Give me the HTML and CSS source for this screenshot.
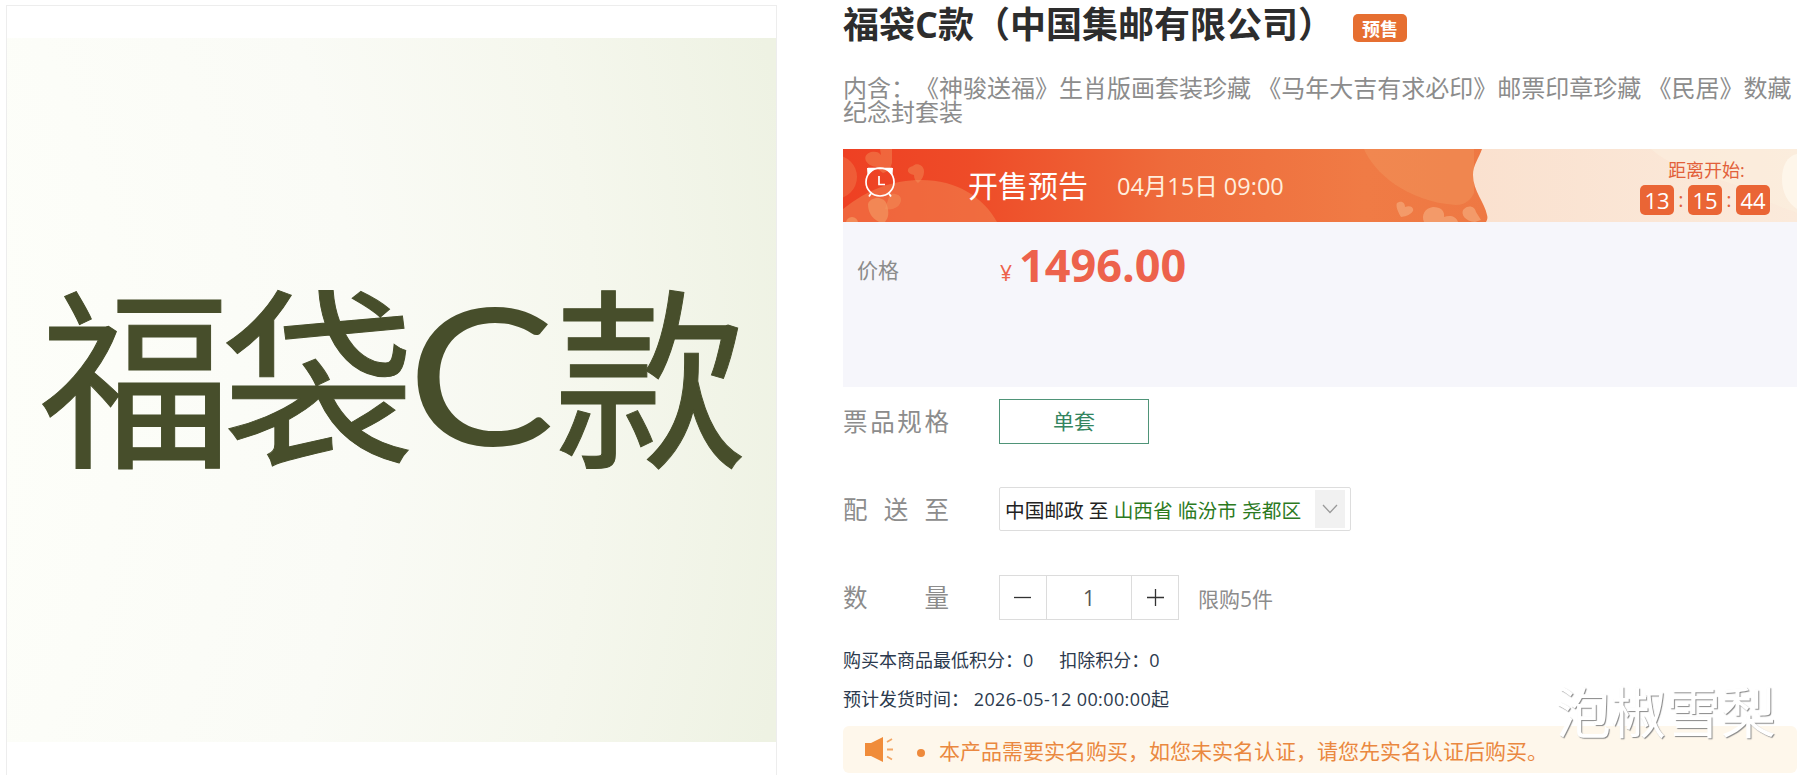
FILE: index.html
```html
<!DOCTYPE html>
<html lang="zh-CN">
<head>
    <meta charset="UTF-8">
    <meta name="viewport" content="width=device-width, initial-scale=1.0">
    <title>福袋C款（中国集邮有限公司）</title>
    <link rel="stylesheet" href="styles.css">
</head>
<body>

    <main class="product">
        <!-- 商品图片 -->
        <div class="gallery">
            <svg class="cover" viewBox="0 0 769 704" width="769" height="704">
                <defs>
                    <radialGradient id="coverBg" gradientUnits="userSpaceOnUse" cx="-700" cy="352" r="1500">
                        <stop offset="0.46" stop-color="#fdfef9"/>
                        <stop offset="0.7" stop-color="#fafbf6"/>
                        <stop offset="0.86" stop-color="#f5f7ed"/>
                        <stop offset="1" stop-color="#eef2e3"/>
                    </radialGradient>
                </defs>
                <rect width="769" height="704" fill="url(#coverBg)"/>
                <g class="cover-text">
                    <text x="32" y="415">福</text>
                    <text x="215" y="415">袋</text>
                    <text class="latin" transform="translate(400 407) scale(1.16 1)">C</text>
                    <text x="547" y="415">款</text>
                </g>
            </svg>
        </div>

        <!-- 商品信息 -->
        <div class="info">
            <h1 class="title">福袋C款（中国集邮有限公司）<span class="badge">预售</span></h1>
            <p class="desc">内含：《神骏送福》生肖版画套装珍藏 《马年大吉有求必印》邮票印章珍藏 《民居》数藏<br>纪念封套装</p>

            <div class="banner">
                <svg class="banner-bg" viewBox="0 0 954 73" width="954" height="73">
                    <defs>
                        <linearGradient id="hot" x1="0" y1="0" x2="1" y2="0">
                            <stop offset="0" stop-color="#ee4023"/>
                            <stop offset="0.2" stop-color="#ee4c28"/>
                            <stop offset="0.5" stop-color="#ee6b3b"/>
                            <stop offset="0.8" stop-color="#f07b45"/>
                            <stop offset="1" stop-color="#ee7843"/>
                        </linearGradient>
                        <linearGradient id="pale" x1="0" y1="0" x2="1" y2="0">
                            <stop offset="0" stop-color="#fae1cf"/>
                            <stop offset="1" stop-color="#fbeadb"/>
                        </linearGradient>
                    </defs>
                    <rect width="652" height="73" fill="url(#hot)"/>
                    <g fill="#f39a62">
                        <path opacity="0.4" d="M0 60C25 40 50 31 78 31c36 0 62 17 76 42H0z"/>
                        <circle opacity="0.3" cx="-8" cy="28" r="22"/>
                        <path opacity="0.4" d="M37 0h12v14q-2 8-9 10c-3-2-5-4-6-6-12-1-16-12-6-15 5-1 8 0 10 3z"/>
                        <path opacity="0.4" d="M75 34c-3-2-4-5-4-8-8-1-8-8-1-9 3-4 11-1 11 5 0 4-1 8-6 12z"/>
                        <path opacity="0.4" d="M42 60c8 2 16-3 16-9 0-5-5-7-11-6z"/>
                        <path opacity="0.65" d="M36 73c-8-4-11-11-11-18 2-7 16-9 19 1 2 7 2 12-2 17z"/>
                        <circle opacity="0.7" cx="9" cy="74" r="6"/>
                        <path opacity="0.4" d="M521 0c9 22 42 53 92 56 10 0 15-6 18-12V0z"/>
                    </g>
                    <g fill="#f5a373" opacity="0.8">
                        <path d="M558 68q-6-10-4-14c5-3 8 0 8 4 6-2 9 1 8 4q-3 5-12 6z"/>
                        <path d="M581 73c-3-7 1-14 9-15 8 0 12 4 11 10 6-2 12-1 14 5z"/>
                        <path d="M632 73c-10-1-14-7-12-12 5-6 12-4 13 2l5 8z"/>
                    </g>
                    <path fill="url(#pale)" d="M639 0c-3 9-9 16-9 26 0 16 12 28 14 40 1 3 0 5-1 7h311V0z"/>
                    <path fill="#fbeedd" opacity="0.6" d="M808 0c10 8 20 16 40 20 20 12 50 12 80 34l26 10V0z"/>
                    <path fill="#fef6ea" d="M954 5c-10 2-15 12-15 25 0 14 6 24 15 30z"/>
                </svg>
                <svg class="clock" viewBox="0 0 32 32" width="32" height="32" fill="none" stroke="#fff" stroke-width="1.7">
                    <circle cx="16" cy="16" r="14"/>
                    <path fill="#fff" stroke="none" d="M3 2h8L3.500 9zM29 2h-8l7.500 7z"/>
                    <path d="M4 2.500h24M7 27.500l-2 3M25 27.500l2 3M15 10v8.500h6"/>
                </svg>
                <span class="banner-title">开售预告</span>
                <span class="banner-date">04月15日 09:00</span>
                <div class="countdown">
                    <div class="countdown-label">距离开始:</div>
                    <div class="countdown-time">
                        <b>13</b><i>:</i><b>15</b><i>:</i><b>44</b>
                    </div>
                </div>
            </div>

            <div class="price-box">
                <span class="price-label">价格</span>
                <span class="yen">¥</span>
                <span class="price">1496.00</span>
            </div>

            <div class="row">
                <span class="label">票品规格</span>
                <div class="spec">单套</div>
            </div>

            <div class="row">
                <span class="label">配送至</span>
                <div class="address">
                    <span>中国邮政 至 <em>山西省 临汾市 尧都区</em></span>
                    <span class="arrow">
                        <svg viewBox="0 0 16 10" width="16" height="10" fill="none" stroke="#999" stroke-width="1.300"><path d="M1 1l7 7.500L15 1"/></svg>
                    </span>
                </div>
            </div>

            <div class="row">
                <span class="label">数量</span>
                <div class="stepper">
                    <span><svg viewBox="0 0 17 17" width="17" height="17" stroke="#333" stroke-width="1.300"><path d="M0 8.500h17"/></svg></span>
                    <span class="num">1</span>
                    <span><svg viewBox="0 0 17 17" width="17" height="17" stroke="#333" stroke-width="1.300"><path d="M0 8.500h17M8.500 0v17"/></svg></span>
                </div>
                <span class="limit">限购5件</span>
            </div>

            <div class="meta">购买本商品最低积分：0<span class="deduct">扣除积分：0</span></div>
            <div class="meta">预计发货时间： <span class="ship">2026-05-12 00:00:00起</span></div>

            <div class="notice">
                <svg class="horn" viewBox="0 0 28 25" width="28" height="25">
                    <path fill="#f08c3a" d="M0 6h6L18 0v25L6 19H0z"/>
                    <path fill="none" stroke="#f3a765" stroke-width="1.800" d="M22 5l5-3M22 12.500h6M22 19.500l5 3"/>
                </svg>
                <span class="dot"></span>
                <span class="notice-text">本产品需要实名购买，如您未实名认证，请您先实名认证后购买。</span>
            </div>
        </div>
    </main>

    <div class="watermark">泡椒雪梨</div>

</body>
</html>
```
FILE: styles.css
```css
* {
    box-sizing: border-box;
}

body {
    margin: 0;
    height: 775px;
    overflow: hidden;
    background: #fff;
    color: #333;
    font-family: "Open Sans", "Noto Sans CJK SC", sans-serif;
    text-spacing-trim: space-all;
}

.product {
    display: flex;
    align-items: flex-start;
    padding-left: 6px;
}

/* 左侧图片 */
.gallery {
    width: 771px;
    height: 796px;
    margin: 5px 66px 0 0;
    padding-top: 32px;
    border: 1px solid #ededed;
    flex: none;
}

.cover {
    display: block;
    width: 769px;
}

.cover-text {
    font-family: "Noto Sans CJK SC", sans-serif;
    font-weight: 400;
    font-size: 193px;
    fill: #474e2b;
    stroke: #474e2b;
    stroke-width: 1px;
}

.cover-text .latin {
    font-family: Lato, sans-serif;
    font-size: 191px;
    stroke: none;
}

/* 右侧信息 */
.info {
    width: 954px;
    flex: none;
}

.title {
    display: flex;
    align-items: center;
    height: 50px;
    margin: 0;
    font-size: 36px;
    line-height: 50px;
    color: #2d2d2d;
}

.badge {
    height: 28px;
    margin: 6px 0 0 19px;
    padding: 0 9px;
    border-radius: 5px;
    background: #e66f31;
    color: #fff;
    font-size: 18px;
    line-height: 30px;
}

.desc {
    margin: 26px 0 25px;
    font-size: 24px;
    line-height: 24px;
    white-space: nowrap;
    color: #8c8c8c;
}

.banner {
    position: relative;
    display: flex;
    align-items: center;
    height: 73px;
    color: #fff;
}

.banner-bg {
    position: absolute;
    top: 0;
    left: 0;
    z-index: -1;
}

.clock {
    margin: -7px 0 0 21px;
}

.banner-title {
    margin: -4px 0 0 72px;
    width: 149px;
    font-size: 30px;
}

.banner-date {
    margin-top: -2px;
    font-size: 23.500px;
    color: #ffeedd;
}

.countdown {
    margin: 0 27px 0 auto;
    color: #e2603a;
    text-align: center;
}

.countdown-label {
    height: 28px;
    padding-left: 3px;
    font-size: 18px;
    line-height: 27px;
}

.countdown-time {
    display: flex;
}

.countdown-time b {
    width: 34px;
    height: 30px;
    border-radius: 5px;
    background: #ea6535;
    color: #fff;
    font-size: 22px;
    font-weight: 400;
    line-height: 31px;
}

.countdown-time i {
    width: 14px;
    font-style: normal;
    font-size: 20px;
    line-height: 30px;
}

.price-box {
    display: flex;
    align-items: center;
    height: 165px;
    padding: 0 0 81px 14px;
    background: #f6f6fb;
    color: #ed624c;
}

.price-label {
    width: 143px;
    margin-top: 9px;
    font-size: 21px;
    color: #8c8c8c;
}

.yen {
    width: 19px;
    margin-top: 17px;
    font-size: 21px;
}

.price {
    font-size: 45px;
    font-weight: 700;
}

/* 选项行 */
.row {
    display: flex;
    align-items: center;
    height: 45px;
    margin-bottom: 43px;
}

.price-box + .row {
    margin-top: 12px;
}

.label {
    width: 106px;
    margin-right: 50px;
    font-size: 24.500px;
    line-height: 36px;
    color: #8c8c8c;
    text-align: justify;
    text-align-last: justify;
    text-justify: inter-character;
}

.spec {
    width: 150px;
    height: 45px;
    border: 1px solid #4f9478;
    color: #34855f;
    font-size: 21px;
    line-height: 43px;
    text-align: center;
}

.address {
    display: flex;
    align-items: center;
    justify-content: space-between;
    width: 352px;
    height: 44px;
    margin-bottom: 1px;
    padding: 0 5px;
    border: 1px solid #ddd;
    border-radius: 2px;
    font-size: 19.700px;
    color: #222;
}

.address em {
    font-style: normal;
    color: #2c7a1e;
}

.arrow {
    display: flex;
    align-items: center;
    justify-content: center;
    width: 30px;
    height: 38px;
    background: #f1f1f1;
}

.stepper {
    display: flex;
    width: 180px;
    height: 45px;
    border: 1px solid #dcdcdc;
}

.stepper span {
    display: flex;
    align-items: center;
    justify-content: center;
    width: 46px;
}

.stepper .num {
    width: 87px;
    border: solid #dcdcdc;
    border-width: 0 1px;
    font-size: 21px;
    color: #555;
}

.limit {
    margin-left: 19px;
    font-size: 21px;
    color: #8c8c8c;
}

.meta {
    height: 39px;
    font-size: 18px;
    line-height: 39px;
    color: #2c3a4e;
}

.row + .meta {
    margin-top: -22px;
}

.deduct {
    margin-left: 26px;
}

.ship {
    letter-spacing: 0.4px;
}

.notice {
    display: flex;
    align-items: center;
    height: 47px;
    margin-top: 7px;
    border-radius: 6px;
    background: #fef7eb;
    color: #ea8840;
    font-size: 21px;
    line-height: 47px;
}

.notice-text {
    padding-top: 3px;
}

.horn {
    margin: 0 24px 0 22px;
}

.dot {
    width: 8px;
    height: 8px;
    margin: 6px 14px 0 0;
    border-radius: 50%;
    background: #ee8a3c;
}

/* 水印 */
.watermark {
    position: absolute;
    right: 27px;
    bottom: 23px;
    color: #fff;
    font-size: 55px;
    font-weight: 400;
    line-height: 80px;
    text-shadow: 1px 1px 1px #888;
}
```
